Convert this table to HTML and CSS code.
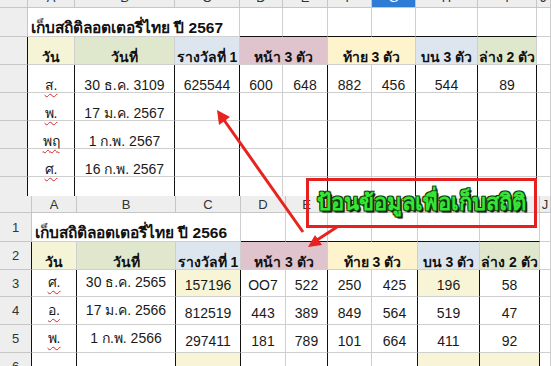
FILE: index.html
```html
<!DOCTYPE html>
<html lang="th">
<head>
<meta charset="utf-8">
<title>เก็บสถิติลอตเตอรี่ไทย</title>
<link rel="stylesheet" href="styles.css">
</head>
<body>
<div class="canvas">
  <section class="sheet sheet-top">
    <div class="grid grid-top">
      <div class="ch corner"></div><div class="ch">A</div><div class="ch">B</div><div class="ch">C</div><div class="ch">D</div><div class="ch">E</div><div class="ch">F</div><div class="ch sel">G</div><div class="ch">H</div><div class="ch">I</div><div class="ch">J</div>

      <div class="rh"></div><div class="title span3 kb">เก็บสถิติลอตเตอรี่ไทย ปี 2567</div><div class="c kb"></div><div class="c kb"></div><div class="c kb"></div><div class="c kb"></div><div class="c kb"></div><div class="c kb"></div><div class="c"></div>

      <div class="rh rk"></div><div class="hd y1 k kb">วัน</div><div class="hd g1 k kb">วันที่</div><div class="hd b1 k kb">รางวัลที่ 1</div><div class="hd p1 span2 k kb">หน้า 3 ตัว</div><div class="hd y2 span2 k kb">ท้าย 3 ตัว</div><div class="hd b1 k kb">บน 3 ตัว</div><div class="hd g1 k kb">ล่าง 2 ตัว</div><div class="c"></div>

      <div class="rh rk"></div><div class="c k"><span class="sp">ส.</span></div><div class="c k">30 ธ.ค. 3109</div><div class="c k">625544</div><div class="c">600</div><div class="c k">648</div><div class="c">882</div><div class="c k">456</div><div class="c k">544</div><div class="c k">89</div><div class="c"></div>

      <div class="rh rk"></div><div class="c k"><span class="sp">พ.</span></div><div class="c k">17 ม.ค. 2567</div><div class="c k"></div><div class="c"></div><div class="c k"></div><div class="c"></div><div class="c k"></div><div class="c k"></div><div class="c k"></div><div class="c"></div>

      <div class="rh rk"></div><div class="c k"><span class="sp">พฤ</span></div><div class="c k">1 ก.พ. 2567</div><div class="c k"></div><div class="c"></div><div class="c k"></div><div class="c"></div><div class="c k"></div><div class="c k"></div><div class="c k"></div><div class="c"></div>

      <div class="rh rk"></div><div class="c k"><span class="sp">ศ.</span></div><div class="c k">16 ก.พ. 2567</div><div class="c k"></div><div class="c"></div><div class="c k"></div><div class="c"></div><div class="c k"></div><div class="c k"></div><div class="c k"></div><div class="c"></div>

      <div class="rh rk"></div><div class="c k"></div><div class="c k"></div><div class="c k"></div><div class="c"></div><div class="c k"></div><div class="c"></div><div class="c k"></div><div class="c k"></div><div class="c k"></div><div class="c"></div>
    </div>
  </section>

  <section class="sheet sheet-bottom">
    <div class="grid grid-bottom">
      <div class="ch corner"></div><div class="ch">A</div><div class="ch">B</div><div class="ch">C</div><div class="ch">D</div><div class="ch">E</div><div class="ch">F</div><div class="ch">G</div><div class="ch">H</div><div class="ch">I</div><div class="ch">J</div>

      <div class="rh">1</div><div class="title span3 kb">เก็บสถิติลอตเตอรี่ไทย ปี 2566</div><div class="c kb"></div><div class="c kb"></div><div class="c kb"></div><div class="c kb"></div><div class="c kb"></div><div class="c kb"></div><div class="c"></div>

      <div class="rh rk">2</div><div class="hd y1 k kb">วัน</div><div class="hd g1 k kb">วันที่</div><div class="hd b1 k kb">รางวัลที่ 1</div><div class="hd p1 span2 k kb">หน้า 3 ตัว</div><div class="hd y2 span2 k kb">ท้าย 3 ตัว</div><div class="hd b1 k kb">บน 3 ตัว</div><div class="hd g1 k kb">ล่าง 2 ตัว</div><div class="c"></div>

      <div class="rh rk">3</div><div class="c k"><span class="sp">ศ.</span></div><div class="c k">30 ธ.ค. 2565</div><div class="c k hl">157196</div><div class="c">OO7</div><div class="c k">522</div><div class="c">250</div><div class="c k">425</div><div class="c k hl">196</div><div class="c k">58</div><div class="c"></div>

      <div class="rh rk">4</div><div class="c k"><span class="sp">อ.</span></div><div class="c k">17 ม.ค. 2566</div><div class="c k">812519</div><div class="c">443</div><div class="c k">389</div><div class="c">849</div><div class="c k">564</div><div class="c k">519</div><div class="c k">47</div><div class="c"></div>

      <div class="rh rk">5</div><div class="c k"><span class="sp">พ.</span></div><div class="c k">1 ก.พ. 2566</div><div class="c k">297411</div><div class="c">181</div><div class="c k">789</div><div class="c">101</div><div class="c k">664</div><div class="c k">411</div><div class="c k">92</div><div class="c"></div>

      <div class="rh rk">6</div><div class="c k"></div><div class="c k"></div><div class="c k hl"></div><div class="c"></div><div class="c k"></div><div class="c"></div><div class="c k"></div><div class="c k hl"></div><div class="c k hl"></div><div class="c"></div>
    </div>
  </section>

  <svg class="arrows" width="551" height="366" viewBox="0 0 551 366" aria-hidden="true">
    <line x1="303" y1="232" x2="224" y2="120" stroke="#e8231f" stroke-width="3"/>
    <polygon points="217,110 230,117 219,125" fill="#e8231f"/>
    <line x1="337" y1="227" x2="317" y2="240" stroke="#e8231f" stroke-width="3"/>
    <polygon points="308,247 315,235 322,245" fill="#e8231f"/>
  </svg>

  <div class="callout"><span class="callout-text">ป้อนข้อมูลเพื่อเก็บสถิติ</span></div>
</div>
</body>
</html>
```

FILE: styles.css
```css
* { box-sizing: border-box; }
html, body { margin: 0; padding: 0; background: #fff; }
body { width: 551px; height: 366px; overflow: hidden; font-family: "Liberation Sans", Tahoma, sans-serif; }

.canvas { position: relative; width: 551px; height: 366px; overflow: hidden; background: #fff; }

.sheet { position: absolute; left: 0; width: 551px; background: #fff; overflow: hidden; }
.sheet-top { top: 0; height: 196px; }
.sheet-bottom { top: 196px; height: 170px; }

.grid { display: grid; }
.grid-top {
  margin-top: -12px;
  grid-template-columns: 28px 47px 100px 65px 43px 45px 44px 44px 62px 59px 14px;
  grid-template-rows: 20px 29px 28px 28px 28px 28px 28px 28px;
}
.grid-bottom {
  grid-template-columns: 32px 45px 99px 65px 45px 42px 44px 46px 62px 60px 11px;
  grid-template-rows: 17px 29px 28px 27px 28px 28px 28px;
}

.ch {
  background: #eeeeee;
  border-right: 1px solid #c6c6c6;
  border-bottom: 1px solid #c6c6c6;
  color: #333;
  font-size: 13px;
  display: flex; align-items: center; justify-content: center;
}
.ch.sel { background: #2e7bd6; color: #fff; }
.rh {
  background: #eeeeee;
  border-right: 1px solid #c6c6c6;
  border-bottom: 1px solid #c6c6c6;
  color: #333;
  font-size: 13px;
  display: flex; align-items: center; justify-content: center;
}
.rh.rk { border-right-color: #111; }

.c {
  border-right: 1px solid #cfcfcf;
  border-bottom: 1px solid #cfcfcf;
  font-size: 14px;
  color: #1a1a1a;
  display: flex; align-items: flex-end; justify-content: center;
  padding-bottom: 3px;
  white-space: nowrap;
}
.grid-top .c { line-height: 14px; padding-bottom: 0; }
.k { border-right-color: #111; }
.kb { border-bottom-color: #111; }
.hl { background: #f7f5d6; }

.span2 { grid-column: span 2; }
.span3 { grid-column: span 3; }

.title {
  border-right: 1px solid #cfcfcf;
  border-bottom: 1px solid #cfcfcf;
  font-size: 15.5px; font-weight: bold; color: #111;
  display: flex; align-items: flex-end;
  padding: 0 0 0 3px;
  line-height: 17px;
  white-space: nowrap;
}

.hd {
  border-right: 1px solid #cfcfcf;
  border-bottom: 1px solid #cfcfcf;
  font-size: 14px; font-weight: bold; color: #111;
  display: flex; align-items: flex-end; justify-content: center;
  padding-bottom: 0;
  line-height: 14px;
  white-space: nowrap;
}
.y1 { background: #f6f4d6; }
.g1 { background: #dfe8cc; }
.b1 { background: #dde6ef; }
.p1 { background: #dfc3cd; }
.y2 { background: #fdf3cc; }

.sp { text-decoration: underline wavy #d6262a; text-decoration-thickness: 1px; text-underline-offset: 3px; }

.arrows { position: absolute; left: 0; top: 0; pointer-events: none; }

.callout {
  position: absolute; left: 306px; top: 178px; width: 231px; height: 50px;
  border: 3px solid #e5201e;
  display: flex; align-items: center; justify-content: center;
}
.callout-text {
  font-size: 22px; font-weight: bold; color: #36e636;
  line-height: 26px;
  text-shadow: 1px 1px 0 #0d3b0d, -1px -1px 0 #0d3b0d, 1px -1px 0 #0d3b0d, -1px 1px 0 #0d3b0d, 2px 2px 1px #000;
  white-space: nowrap;
}
```
